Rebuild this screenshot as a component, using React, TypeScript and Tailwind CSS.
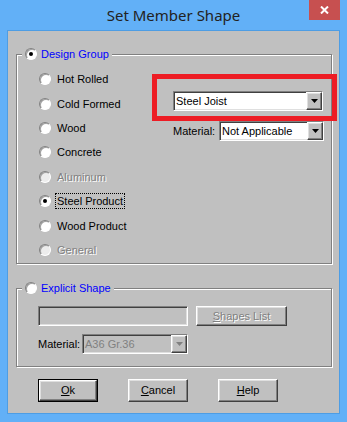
import { ReactNode } from 'react'

const sunken = 'border border-t-[#808080] border-l-[#808080] border-r-white border-b-white shadow-[inset_1px_1px_0_#404040,inset_-1px_-1px_0_#dfdfdf]'
const raised = 'border border-t-white border-l-white border-r-[#404040] border-b-[#404040] shadow-[inset_-1px_-1px_0_#808080,inset_1px_1px_0_#dfdfdf]'
const etched = 'border border-[#808080] shadow-[inset_1px_1px_0_#fff,1px_1px_0_#fff]'
const dim = 'text-[#808080] [text-shadow:1px_1px_0_#fff]'

function Radio({ checked = false, disabled = false }: { checked?: boolean; disabled?: boolean }) {
  return (
    <span className={`relative inline-block w-[12px] h-[12px] shrink-0 rounded-full border border-t-[#808080] border-l-[#808080] border-r-white border-b-white shadow-[inset_1px_1px_0_#a0a0a0] ${disabled ? 'bg-[#ececec]' : 'bg-white'}`}>
      {checked && <span className="absolute left-[3px] top-[3px] w-[4px] h-[4px] rounded-full bg-black" />}
    </span>
  )
}

function Arrow({ disabled = false }: { disabled?: boolean }) {
  return (
    <span className={`flex items-center justify-center w-[16px] h-full bg-[#c0c0c0] ${raised}`}>
      <svg width="7" height="4" viewBox="0 0 7 4">
        <path d="M0 0h7L3.5 4z" fill={disabled ? '#808080' : '#000'} />
      </svg>
    </span>
  )
}

function Combo({ value, width, disabled = false }: { value: string; width: string; disabled?: boolean }) {
  return (
    <div className={`flex items-stretch h-[20px] ${width} ${sunken} ${disabled ? 'bg-[#c0c0c0]' : 'bg-white'}`}>
      <span className={`flex-1 pl-[2px] leading-[18px] ${disabled ? 'text-[#808080]' : 'text-black'}`}>{value}</span>
      <Arrow disabled={disabled} />
    </div>
  )
}

function Option({ label, checked, disabled, focus }: { label: string; checked?: boolean; disabled?: boolean; focus?: boolean }) {
  return (
    <div className="flex items-center h-[24.4px]">
      <Radio checked={checked} disabled={disabled} />
      <span className={`ml-[4px] px-[1px] leading-[14px] border border-dotted ${focus ? 'border-black' : 'border-transparent'} ${disabled ? dim : ''}`}>{label}</span>
    </div>
  )
}

function Btn({ children, def = false, disabled = false, width = 'w-[60px]', height = 'h-[23px]' }: { children: ReactNode; def?: boolean; disabled?: boolean; width?: string; height?: string }) {
  const inner = (
    <div className={`flex items-center justify-center w-full h-full bg-[#c0c0c0] ${raised} ${disabled ? dim : 'text-black'}`}>{children}</div>
  )
  return (
    <div className={`${width} ${height} ${def ? 'border border-black' : ''}`}>{inner}</div>
  )
}

export default function App() {
  return (
    <div className="w-[347px] h-[422px] bg-[#62b0f7] font-['Liberation_Sans',Arial,sans-serif] text-[11px] text-black select-none">
      {/* title bar */}
      <div className="relative h-[30px] flex items-center justify-center">
        <span className="font-['Noto_Sans',sans-serif] text-[15px] text-[#222] mt-[1px]">Set Member Shape</span>
        <div className="absolute left-[309px] top-0 w-[31px] h-[20px] bg-[#c75050] flex items-center justify-center">
          <svg width="9" height="8" viewBox="0 0 9 8">
            <path d="M1 0.5l7 7M8 0.5l-7 7" stroke="#fff" strokeWidth="2" />
          </svg>
        </div>
      </div>

      {/* client area */}
      <div className="ml-[7px] w-[333px] h-[384px] bg-[#c0c0c0] border border-[#4d9de4]">
        {/* Design Group */}
        <div className={`relative ml-[8px] mt-[23px] w-[316px] h-[210px] ${etched}`}>
          <div className="absolute left-[5px] top-[-8px] flex items-center gap-[4px] px-[3px] bg-[#c0c0c0] h-[14px]">
            <Radio checked />
            <span className="text-[#0000ff]">Design Group</span>
          </div>
          <div className="flex pl-[22px]">
            <div className="w-[134px] pt-[12px]">
              <Option label="Hot Rolled" />
              <Option label="Cold Formed" />
              <Option label="Wood" />
              <Option label="Concrete" />
              <Option label="Aluminum" disabled />
              <Option label="Steel Product" checked focus />
              <Option label="Wood Product" />
              <Option label="General" disabled />
            </div>
            <div className="pt-[36px]">
              <Combo value="Steel Joist" width="w-[150px]" />
              <div className="flex items-center mt-[10px]">
                <span className="w-[46px]">Material:</span>
                <Combo value="Not Applicable" width="w-[105px]" />
              </div>
            </div>
          </div>
          {/* highlight annotation */}
          <div className="absolute left-[135px] top-[19px] w-[185px] h-[47px] border-[5px] border-[#ed1c24]" />
        </div>

        {/* Explicit Shape */}
        <div className={`relative ml-[8px] mt-[24px] w-[316px] h-[79px] ${etched}`}>
          <div className="absolute left-[5px] top-[-8px] flex items-center gap-[4px] px-[3px] bg-[#c0c0c0] h-[14px]">
            <Radio />
            <span className="text-[#0000ff]">Explicit Shape</span>
          </div>
          <div className="pl-[21px] pt-[17px]">
            <div className="flex items-center gap-[8px]">
              <div className={`w-[150px] h-[20px] bg-[#c0c0c0] ${sunken}`} />
              <Btn disabled width="w-[91px]" height="h-[20px]">
                <span><u>S</u>hapes List</span>
              </Btn>
            </div>
            <div className="flex items-center mt-[8px]">
              <span className="w-[44px]">Material:</span>
              <Combo value="A36 Gr.36" width="w-[106px]" disabled />
            </div>
          </div>
        </div>

        {/* buttons */}
        <div className="flex gap-[30px] ml-[30px] mt-[12px]">
          <Btn def><span><u>O</u>k</span></Btn>
          <Btn><span><u>C</u>ancel</span></Btn>
          <Btn><span><u>H</u>elp</span></Btn>
        </div>
      </div>
    </div>
  )
}
